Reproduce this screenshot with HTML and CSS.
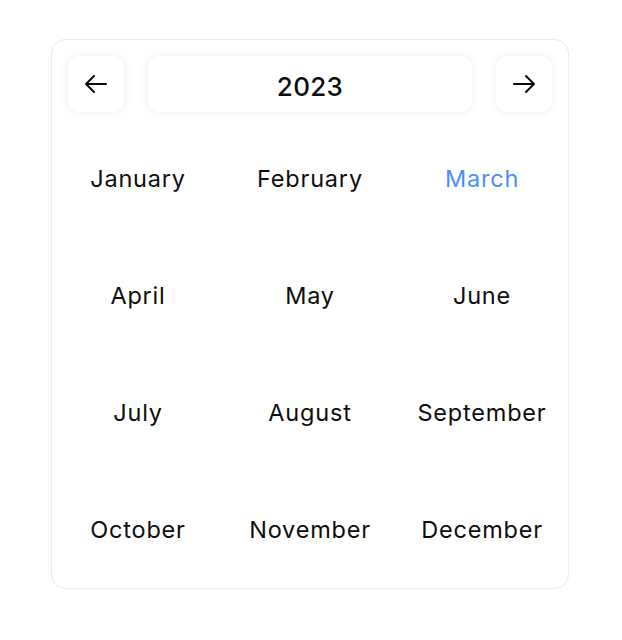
FILE: index.html
```html
<!DOCTYPE html>
<html>
<head>
<meta charset="utf-8">
<link rel="stylesheet" href="styles.css">
</head>
<body>
<div class="card">
  <div class="header">
    <button class="nav-btn" aria-label="Previous year">
      <svg width="24" height="24" viewBox="0 0 24 24" fill="none" stroke="#0d0d0d" stroke-width="2" stroke-linecap="round" stroke-linejoin="round"><path d="M22 12H2M10 4l-8 8 8 8"/></svg>
    </button>
    <div class="year">2023</div>
    <button class="nav-btn" aria-label="Next year">
      <svg width="24" height="24" viewBox="0 0 24 24" fill="none" stroke="#0d0d0d" stroke-width="2" stroke-linecap="round" stroke-linejoin="round"><path d="M2 12h20M14 4l8 8-8 8"/></svg>
    </button>
  </div>
  <div class="months">
    <div class="month">January</div>
    <div class="month">February</div>
    <div class="month active">March</div>
    <div class="month">April</div>
    <div class="month">May</div>
    <div class="month">June</div>
    <div class="month">July</div>
    <div class="month">August</div>
    <div class="month">September</div>
    <div class="month">October</div>
    <div class="month">November</div>
    <div class="month">December</div>
  </div>
</div>
</body>
</html>
```
FILE: styles.css
```css
* { box-sizing: border-box; }
html, body { margin: 0; padding: 0; background: #fff; }
body {
  font-family: Inter, "Noto Sans", sans-serif;
  color: #0d0d0d;
  padding: 38.5px 0 0 51px;
}
.card {
  width: 518px;
  height: 550.5px;
  border: 1.5px solid #ececec;
  border-radius: 14px;
  padding: 16px 0 0;
  background: #fff;
  display: flex;
  flex-direction: column;
}
.header {
  display: flex;
  gap: 24px;
  padding: 0 16px;
  height: 56px;
}
.nav-btn {
  width: 56px;
  height: 56px;
  border: none;
  background: #fff;
  border-radius: 12px;
  box-shadow: 0 0 10px rgba(0,0,0,0.08);
  display: flex;
  align-items: center;
  justify-content: center;
  padding: 0;
  flex: none;
}
.year {
  flex: 1;
  border-radius: 12px;
  box-shadow: 0 0 10px rgba(0,0,0,0.08);
  display: flex;
  align-items: center;
  justify-content: center;
  padding-top: 5px;
  font-size: 26px;
  font-weight: 500;
  letter-spacing: 0.3px;
}
.months {
  margin-top: 7px;
  display: grid;
  grid-template-columns: repeat(3, 1fr);
  grid-template-rows: repeat(4, 117px);
}
.month {
  display: flex;
  align-items: center;
  justify-content: center;
  padding-top: 3px;
  font-size: 23.5px;
  font-weight: 400;
  letter-spacing: 0.8px;
}
.active { color: #4b8ff5; }
```
